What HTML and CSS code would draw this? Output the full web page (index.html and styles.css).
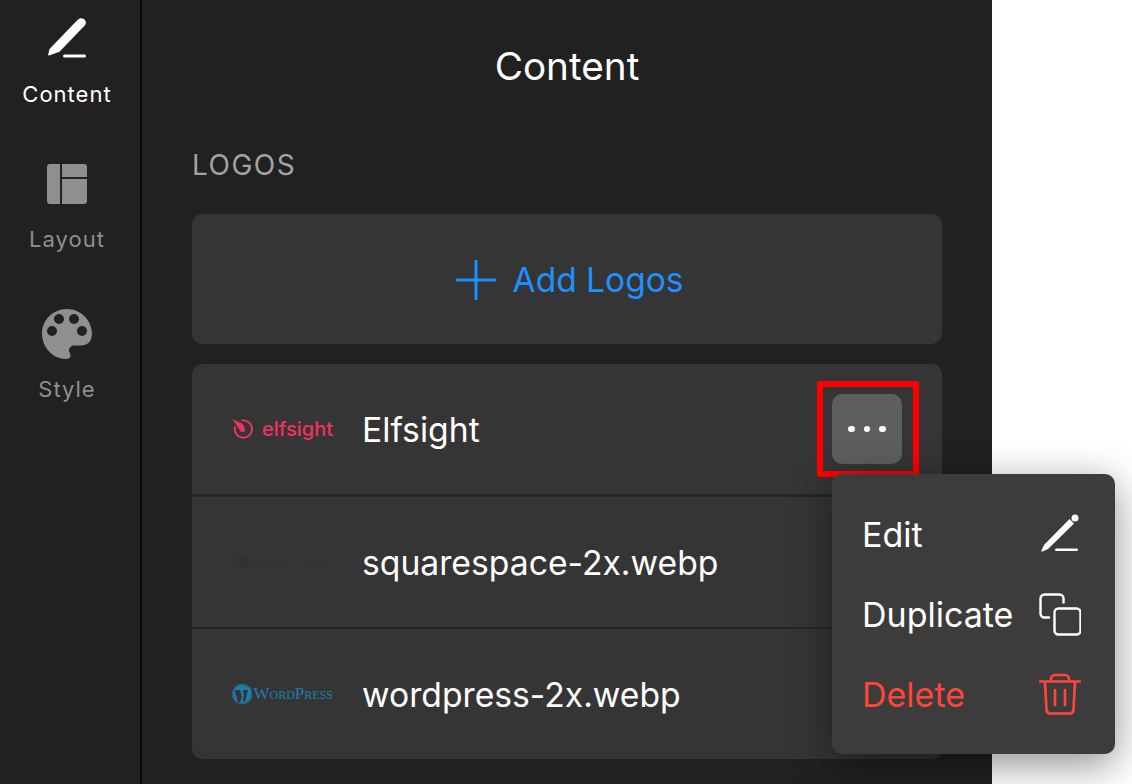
FILE: index.html
```html
<!DOCTYPE html>
<html>
<head>
<meta charset="utf-8">
<title>Content</title>
<link rel="stylesheet" href="styles.css">
</head>
<body>
  <div class="app">
    <nav class="sidebar">
      <div class="tab tab-active">
        <svg class="tab-icon" width="50" height="50" viewBox="0 0 50 50">
          <path d="M35.500 11C38 8.500 41.500 9 43.200 11.500C44.300 13 44 15 42.700 16.500L17.500 42.700L7 46.500Q6 46.700 6.200 45.500L7.500 40Z" fill="currentColor"/>
          <rect x="21" y="45.500" width="23" height="3" rx="1.500" fill="currentColor"/>
        </svg>
        <span class="tab-label">Content</span>
      </div>
      <div class="tab">
        <svg class="tab-icon" width="50" height="50" viewBox="0 0 50 50">
          <path d="M8 5h10v40H8a3 3 0 0 1-3-3V8a3 3 0 0 1 3-3zM20 5h22a3 3 0 0 1 3 3v10H20zM20 20h25v22a3 3 0 0 1-3 3H20z" fill="currentColor"/>
        </svg>
        <span class="tab-label">Layout</span>
      </div>
      <div class="tab">
        <svg class="tab-icon" width="50" height="50" viewBox="0 0 50 50">
          <path fill-rule="evenodd" fill="currentColor" d="M25 0C11 0 0 11 0 24.500 0 38.500 11 50 24 50c3 0 4.500-1.500 4.500-3.500 0-2-1.500-3-1.500-5 0-3 2.500-5 5.500-5H39c6.500 0 11-4.500 11-11.500C50 11 38.500 0 25 0zM17 5a5 5 0 1 1 0 10 5 5 0 0 1 0-10zM32 5a5 5 0 1 1 0 10 5 5 0 0 1 0-10zM10 17a5 5 0 1 1 0 10 5 5 0 0 1 0-10zM40 17a5 5 0 1 1 0 10 5 5 0 0 1 0-10z"/>
        </svg>
        <span class="tab-label">Style</span>
      </div>
    </nav>

    <main class="panel">
      <h1 class="panel-title">Content</h1>
      <h2 class="section-title">LOGOS</h2>

      <div class="add-logos">
        <svg width="42" height="42" viewBox="0 0 42 42">
          <path d="M21 1v40M1 21h40" stroke="currentColor" stroke-width="3" fill="none"/>
        </svg>
        <span>Add Logos</span>
      </div>

      <div class="logo-list">
        <div class="logo-row">
          <div class="logo-thumb logo-elfsight">
            <svg width="25" height="24" viewBox="0 0 25 24">
              <path d="M10 3.200A9 9 0 1 1 3.200 9.500" fill="none" stroke="currentColor" stroke-width="2"/>
              <path d="M.5 1.500L11 6.500Q14 10 13.500 14Q12 16 9 14.500Z" fill="currentColor"/>
            </svg>
            <span>elfsight</span>
          </div>
          <span class="logo-name">Elfsight</span>
          <div class="more-button"><i></i><i></i><i></i></div>
        </div>
        <div class="logo-row">
          <div class="logo-thumb logo-squarespace">
            <svg width="17" height="14" viewBox="0 0 17 14">
              <path d="M2 8l6-6M5 11l8-8M9 12l6-6" fill="none" stroke="currentColor" stroke-width="2.500" stroke-linecap="round"/>
            </svg>
            <span>SQUARESPACE</span>
          </div>
          <span class="logo-name">squarespace-2x.webp</span>
        </div>
        <div class="logo-row">
          <div class="logo-thumb logo-wordpress">
            <svg width="23" height="24" viewBox="0 0 23 24">
              <circle cx="11.500" cy="12" r="11.500" fill="currentColor"/>
              <circle cx="11.500" cy="12" r="10.600" fill="none" stroke="#353535" stroke-width=".5"/>
              <path d="M3 7.500h6l3 10 1.700-4.500-2-5.500h6.300l-3.200 13h-1.600L11 15l-2.300 7h-1.800z" fill="#353535"/>
            </svg>
            <span>WordPress</span>
          </div>
          <span class="logo-name">wordpress-2x.webp</span>
        </div>
      </div>
    </main>
  </div>

  <div class="highlight"></div>

  <div class="menu">
    <div class="menu-item">
      <span>Edit</span>
      <svg width="42" height="42" viewBox="0 0 42 42">
        <circle cx="36" cy="5" r="3.500" fill="currentColor"/>
        <path d="M30.500 5.900L35.100 10.500L9 36L3.500 38.500Q2 39 2.500 37.500L5 32Z" fill="currentColor"/>
        <rect x="16" y="35.500" width="23" height="2.400" rx="1.200" fill="currentColor"/>
      </svg>
    </div>
    <div class="menu-item">
      <span>Duplicate</span>
      <svg width="44" height="44" viewBox="0 0 44 44">
        <path d="M12 25.500H7.500a4 4 0 0 1-4-4V6.500a4 4 0 0 1 4-4h15a4 4 0 0 1 4 4v4" fill="none" stroke="currentColor" stroke-width="2.400" stroke-linecap="round"/>
        <rect x="18.500" y="17.500" width="26" height="26" rx="4" transform="translate(-1 -1)" fill="none" stroke="currentColor" stroke-width="2.400"/>
      </svg>
    </div>
    <div class="menu-item menu-item-danger">
      <span>Delete</span>
      <svg width="42" height="42" viewBox="0 0 42 42">
        <path d="M1 7.500h40M12 7V5a4 4 0 0 1 4-4h10a4 4 0 0 1 4 4v2M6 8l1.500 28a4 4 0 0 0 4 3.500h19a4 4 0 0 0 4-3.500L36 8M16 16v15M26 16v15" transform="translate(0 1)" fill="none" stroke="currentColor" stroke-width="2.700" stroke-linecap="round"/>
      </svg>
    </div>
  </div>
</body>
</html>
```

FILE: styles.css
```css
html, body {
  margin: 0;
  height: 100%;
  overflow: hidden;
}
body {
  background: white;
  color: white;
  font-family: Inter, "Liberation Sans", sans-serif;
}
.app {
  display: flex;
  width: 992px;
  height: 784px;
  background: #212121;
}
.sidebar {
  width: 140px;
  flex: none;
  border-right: 2px solid #0a0a0a;
  padding-top: 9px;
  color: #8f8f8f;
}
.tab {
  display: flex;
  flex-direction: column;
  align-items: center;
  width: 134px;
  height: 150px;
}
.tab-active {
  color: white;
}
.tab-icon {
  margin-bottom: 17px;
  flex: none;
}
.tab-active .tab-icon {
  margin-bottom: 22px;
}
.tab-label {
  font-size: 22px;
  line-height: 26px;
  letter-spacing: 1px;
}
.panel {
  flex: 1;
  padding: 0 50px;
}
.panel-title {
  margin: 42px 0 0;
  font-size: 38.700px;
  line-height: 48px;
  font-weight: 400;
  text-align: center;
}
.section-title {
  margin: 59px 0 0;
  font-size: 28px;
  line-height: 32px;
  font-weight: 400;
  letter-spacing: 1.500px;
  color: #a3a3a3;
}
.add-logos {
  display: flex;
  align-items: center;
  justify-content: center;
  gap: 16px;
  height: 130px;
  margin-top: 33px;
  padding: 2px 0 0 4px;
  box-sizing: border-box;
  background: #353535;
  border-radius: 10px;
  color: #1e90ff;
  font-size: 33.500px;
}
.logo-list {
  margin-top: 20px;
  background: #353535;
  border-radius: 10px;
  overflow: hidden;
}
.logo-row {
  display: flex;
  align-items: center;
  height: 130px;
  padding-left: 40px;
  border-bottom: 3px solid #262626;
}
.logo-row:nth-child(2) {
  border-bottom-width: 2px;
}
.logo-row:last-child {
  border-bottom: 0;
}
.logo-thumb {
  display: flex;
  align-items: center;
  width: 101px;
  margin-right: 30px;
  flex: none;
  white-space: nowrap;
}
.logo-name {
  font-size: 33.700px;
  margin-left: -1px;
}
.logo-elfsight {
  color: #f0325f;
  gap: 6px;
  font-size: 20px;
  font-weight: 500;
}
.logo-squarespace {
  color: #30303a;
  gap: 3px;
  font-size: 8px;
  letter-spacing: 2px;
  filter: blur(0.5px);
}
.logo-wordpress {
  color: #1c7eae;
  gap: 1px;
  font-family: "Liberation Serif", serif;
  font-size: 17px;
  font-variant: small-caps;
}
.more-button {
  display: flex;
  align-items: center;
  justify-content: center;
  gap: 9px;
  width: 70px;
  height: 70px;
  margin-left: auto;
  margin-right: 40px;
  background: #5e5e5e;
  border-radius: 10px;
}
.more-button i {
  width: 6.500px;
  height: 6.500px;
  background: white;
  border-radius: 50%;
}
.highlight {
  position: absolute;
  left: 817px;
  top: 381px;
  width: 90px;
  height: 84px;
  border: 6px solid #fe0000;
  border-radius: 2px;
}
.menu {
  position: absolute;
  left: 832px;
  top: 474px;
  width: 283px;
  height: 280px;
  padding: 20px 34px 20px 30px;
  box-sizing: border-box;
  background: #3c3c3c;
  border-radius: 10px;
  box-shadow: 0 10px 40px rgba(0, 0, 0, 0.45);
}
.menu-item {
  display: flex;
  align-items: center;
  justify-content: space-between;
  height: 80px;
  font-size: 34px;
}
.menu-item-danger {
  color: #ff453a;
}
```
